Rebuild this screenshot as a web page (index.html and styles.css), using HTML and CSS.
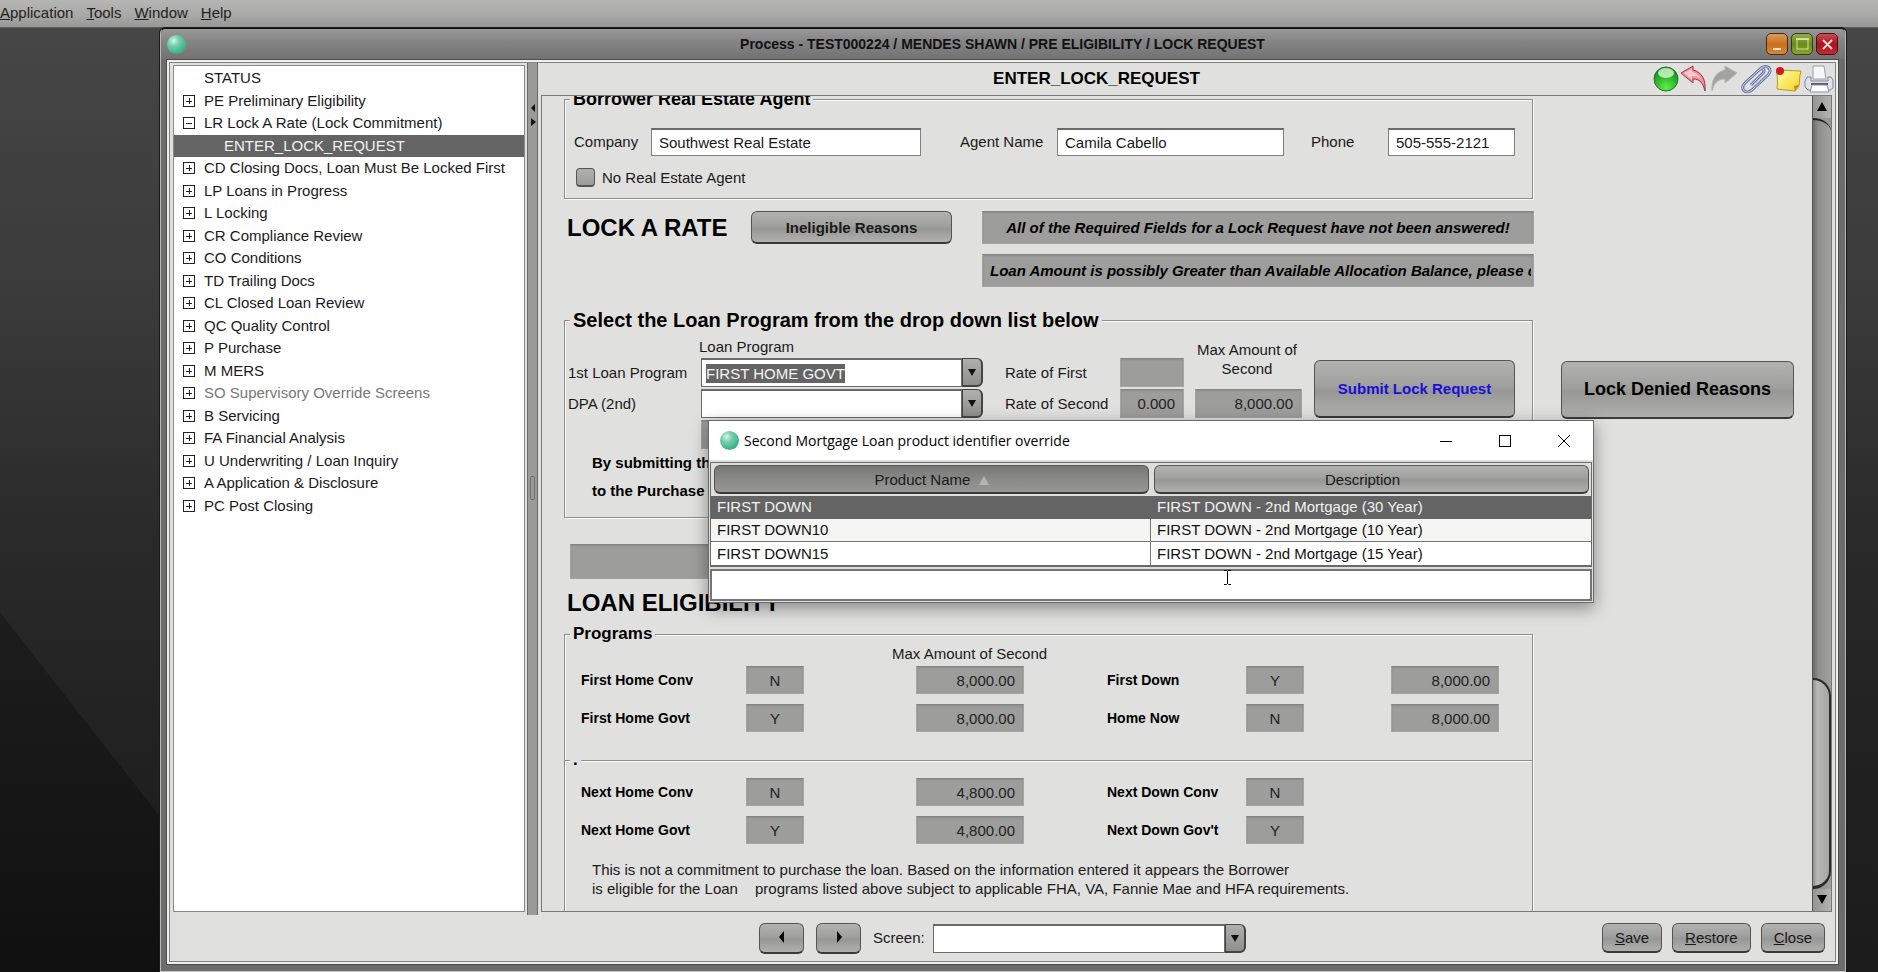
FILE: index.html
```
<!DOCTYPE html>
<html lang="en">
<head>
<meta charset="UTF-8">
<meta name="viewport" content="width=device-width, initial-scale=1.0">
<title>Process - Lock Request</title>
<link rel="stylesheet" href="styles.css">
</head>
<body>
<div class="desktop">

    <nav class="menubar">
        <a href="#"><u>A</u>pplication</a>
        <a href="#"><u>T</u>ools</a>
        <a href="#"><u>W</u>indow</a>
        <a href="#"><u>H</u>elp</a>
    </nav>

    <div class="window">
        <div class="titlebar">
            <span class="globe"></span>
            <span class="window-title">Process - TEST000224 / MENDES SHAWN / PRE ELIGIBILITY / LOCK REQUEST</span>
            <div class="window-buttons">
                <button type="button" class="win-btn minimize" aria-label="Minimize"><svg width="20" height="20" viewBox="0 0 20 20"><path d="M6 15h8" stroke="#f3e3cf" stroke-width="2"/></svg></button>
                <button type="button" class="win-btn maximize" aria-label="Maximize"><svg width="20" height="20" viewBox="0 0 20 20"><rect x="5" y="5" width="11" height="10" fill="none" stroke="#cfe0a8"/><path d="M4 5h13" stroke="#cfe0a8" stroke-width="2"/></svg></button>
                <button type="button" class="win-btn shut" aria-label="Close window"><svg width="20" height="20" viewBox="0 0 20 20"><path d="M6 6l9 9M15 6l-9 9" stroke="#f0d4d4" stroke-width="2"/></svg></button>
            </div>
        </div>

        <div class="window-body">
        <div class="pane">
            <div class="main">
                <div class="tree">
                <ul class="tree-list">
                    <li class="leaf">STATUS</li>
                    <li><i class="box plus"></i>PE Preliminary Eligibility</li>
                    <li><i class="box"></i>LR Lock A Rate (Lock Commitment)</li>
                    <li class="child selected">ENTER_LOCK_REQUEST</li>
                    <li><i class="box plus"></i>CD Closing Docs, Loan Must Be Locked First</li>
                    <li><i class="box plus"></i>LP Loans in Progress</li>
                    <li><i class="box plus"></i>L Locking</li>
                    <li><i class="box plus"></i>CR Compliance Review</li>
                    <li><i class="box plus"></i>CO Conditions</li>
                    <li><i class="box plus"></i>TD Trailing Docs</li>
                    <li><i class="box plus"></i>CL Closed Loan Review</li>
                    <li><i class="box plus"></i>QC Quality Control</li>
                    <li><i class="box plus"></i>P Purchase</li>
                    <li><i class="box plus"></i>M MERS</li>
                    <li class="off"><i class="box plus"></i>SO Supervisory Override Screens</li>
                    <li><i class="box plus"></i>B Servicing</li>
                    <li><i class="box plus"></i>FA Financial Analysis</li>
                    <li><i class="box plus"></i>U Underwriting / Loan Inquiry</li>
                    <li><i class="box plus"></i>A Application &amp; Disclosure</li>
                    <li><i class="box plus"></i>PC Post Closing</li>
                </ul>
                </div>

                <div class="splitter">
                    <svg class="splitter-arrows" width="10" height="24" viewBox="0 0 10 24"><path d="M7 1v8L3 5zM3 15v8l5-4z" fill="#111"/></svg>
                    <span class="grip"></span>
                </div>

                <div class="screen">
                    <div class="screen-head">
                        <h1>ENTER_LOCK_REQUEST</h1>
                        <div class="tools">
                            <button type="button" class="tool" aria-label="Online"><svg width="28" height="30" viewBox="0 0 28 30">
                                <defs><radialGradient id="green" cx="50%" cy="85%" r="80%"><stop offset="0" stop-color="#5cf04a"/><stop offset="1" stop-color="#0a8a16"/></radialGradient></defs>
                                <circle cx="14" cy="15" r="12" fill="url(#green)" stroke="#2b6b2e"/><ellipse cx="14" cy="9" rx="8" ry="5" fill="#d8fbd2" opacity=".8"/></svg></button>
                            <button type="button" class="tool" aria-label="Undo"><svg width="28" height="30" viewBox="0 0 28 30">
                                <path d="M1 9L13 2v4c9 2 13 10 12 21-2-8-5-12-12-12v4z" fill="#f0909a" stroke="#a83040"/><path d="M4 9l8-4v3c5 1 8 4 10 8-3-3-6-4-10-4v4z" fill="#fbc8cc"/></svg></button>
                            <button type="button" class="tool" aria-label="Redo"><svg width="32" height="30" viewBox="0 0 32 30">
                                <path d="M29 9L17 2v4C8 8 3 16 4 27c2-8 6-12 13-12v4z" fill="#a2a2a0" stroke="#b4b4b2"/></svg></button>
                            <button type="button" class="tool" aria-label="Attachment"><svg width="32" height="30" viewBox="0 0 32 30">
                                <path d="M11 20L23 8c3-3-1-6-4-3L5 18c-6 6 1 12 7 7L28 10c6-6-2-12-8-6" transform="translate(0 1)" fill="none" stroke="#6c78a8" stroke-width="3"/>
                                <path d="M11 20L23 8c3-3-1-6-4-3L5 18c-6 6 1 12 7 7L28 10c6-6-2-12-8-6" transform="translate(0 1)" fill="none" stroke="#cdd4ea" stroke-width="1"/></svg></button>
                            <button type="button" class="tool" aria-label="Note"><svg width="32" height="30" viewBox="0 0 32 30">
                                <defs><linearGradient id="note" x1="0" y1="0" x2="1" y2="1"><stop offset="0" stop-color="#ffffa8"/><stop offset="1" stop-color="#f2d21c"/></linearGradient></defs>
                                <path d="M5 6l24 1c-2 6-1 10-2 15l-4 5-18-2c1-7 0-12 0-19z" fill="url(#note)" stroke="#b9962e"/><path d="M27 21l-5 1 1 5z" fill="#b98a1c"/><circle cx="8" cy="7" r="4" fill="#c81e22"/></svg></button>
                            <button type="button" class="tool" aria-label="Print"><svg width="32" height="30" viewBox="0 0 32 30">
                                <path d="M9 2h11l2 13H9z" fill="#f6f7fb" stroke="#9aa0b0"/><path d="M3 13h4v4h17v-4h3l2 3v8l-3 2H4l-3-3v-6z" fill="#dfe2ec" stroke="#7f8596"/><path d="M7 20h17" stroke="#555b6b" stroke-width="2"/><path d="M8 21h15l2 7H6z" fill="#fff" stroke="#8d93a3"/></svg></button>
                        </div>
                    </div>

                    <div class="scroll-pane">
                        <form class="content">
                            <fieldset class="agent">
                                <legend class="medium">Borrower Real Estate Agent</legend>
                                <div class="agent-row">
                                    <label for="company">Company</label>
                                    <input class="text" type="text" id="company" value="Southwest Real Estate">
                                    <label for="agent" class="second">Agent Name</label>
                                    <input class="text" type="text" id="agent" value="Camila Cabello">
                                    <label for="phone" class="third">Phone</label>
                                    <input class="text" type="text" id="phone" value="505-555-2121">
                                </div>
                                <div class="check-row">
                                    <input type="checkbox" id="noagent">
                                    <label for="noagent">No Real Estate Agent</label>
                                </div>
                            </fieldset>

                            <div class="lock-row">
                                <h2>LOCK A RATE</h2>
                                <button type="button" class="btn strong">Ineligible Reasons</button>
                                <div class="messages">
                                    <input class="gray message" type="text" aria-label="Lock message" readonly value="All of the Required Fields for a Lock Request have not been answered!">
                                    <input class="gray message long" type="text" aria-label="Balance message" readonly value="Loan Amount is possibly Greater than Available Allocation Balance, please c">
                                </div>
                            </div>

                            <div class="program-row">
                                <fieldset class="program">
                                    <legend class="large">Select the Loan Program from the drop down list below</legend>
                                    <div class="program-grid">
                                        <span class="head-program">Loan Program</span>
                                        <label for="first" class="col-1 row-2">1st Loan Program</label>
                                        <div class="combo col-2 row-2">
                                            <select id="first" class="marked"><option>FIRST HOME GOVT</option></select>
                                            <span class="arrow"></span>
                                        </div>
                                        <label for="dpa" class="col-1 row-3">DPA (2nd)</label>
                                        <div class="combo col-2 row-3">
                                            <select id="dpa"><option></option></select>
                                            <span class="arrow"></span>
                                        </div>
                                        <input class="gray col-2 row-4" type="text" aria-label="Second program" readonly>
                                        <label for="rate1" class="col-3 row-2">Rate of First</label>
                                        <input class="gray right col-4 row-2" type="text" id="rate1" readonly>
                                        <label for="rate2" class="col-3 row-3">Rate of Second</label>
                                        <input class="gray right col-4 row-3" type="text" id="rate2" readonly value="0.000">
                                        <label for="maxsecond" class="head-max">Max Amount of Second</label>
                                        <input class="gray right col-5 row-3" type="text" id="maxsecond" readonly value="8,000.00">
                                        <button type="button" class="btn strong submit">Submit Lock Request</button>
                                    </div>
                                    <p class="agree">By submitting the<br>to the Purchase</p>
                                </fieldset>
                                <button type="button" class="btn denied">Lock Denied Reasons</button>
                            </div>

                            <input class="gray wide" type="text" aria-label="Status" readonly>
                            <h2 class="eligibility">LOAN ELIGIBILITY</h2>

                            <fieldset class="programs">
                                <legend>Programs</legend>
                                <p class="head-amount">Max Amount of Second</p>
                                <div class="elig-grid">
                                    <label for="fhc">First Home Conv</label>
                                    <input class="gray flag" type="text" id="fhc" readonly value="N">
                                    <input class="gray right money" type="text" aria-label="First Home Conv amount" readonly value="8,000.00">
                                    <label for="fd" class="other">First Down</label>
                                    <input class="gray flag" type="text" id="fd" readonly value="Y">
                                    <input class="gray right money" type="text" aria-label="First Down amount" readonly value="8,000.00">
                                    <label for="fhg">First Home Govt</label>
                                    <input class="gray flag" type="text" id="fhg" readonly value="Y">
                                    <input class="gray right money" type="text" aria-label="First Home Govt amount" readonly value="8,000.00">
                                    <label for="hn" class="other">Home Now</label>
                                    <input class="gray flag" type="text" id="hn" readonly value="N">
                                    <input class="gray right money" type="text" aria-label="Home Now amount" readonly value="8,000.00">
                                </div>
                                <fieldset class="next">
                                    <legend>.</legend>
                                    <div class="elig-grid">
                                        <label for="nhc">Next Home Conv</label>
                                        <input class="gray flag" type="text" id="nhc" readonly value="N">
                                        <input class="gray right money" type="text" aria-label="Next Home Conv amount" readonly value="4,800.00">
                                        <label for="ndc" class="other">Next Down Conv</label>
                                        <input class="gray flag" type="text" id="ndc" readonly value="N">
                                        <span></span>
                                        <label for="nhg">Next Home Govt</label>
                                        <input class="gray flag" type="text" id="nhg" readonly value="Y">
                                        <input class="gray right money" type="text" aria-label="Next Home Govt amount" readonly value="4,800.00">
                                        <label for="ndg" class="other">Next Down Gov't</label>
                                        <input class="gray flag" type="text" id="ndg" readonly value="Y">
                                        <span></span>
                                    </div>
                                    <p class="disclaimer">This is not a commitment to purchase the loan. Based on the information entered it appears the Borrower<br><span class="lead">is eligible for the Loan</span>programs listed above subject to applicable FHA, VA, Fannie Mae and HFA requirements.</p>
                                </fieldset>
                            </fieldset>
                        </form>

                        <div class="scrollbar">
                            <button type="button" class="scroll-btn" aria-label="Scroll up"><svg width="18" height="22" viewBox="0 0 18 22"><path d="M9 6l5 9H4z" fill="#000"/></svg></button>
                            <div class="track"><div class="thumb"></div></div>
                            <button type="button" class="scroll-btn" aria-label="Scroll down"><svg width="18" height="22" viewBox="0 0 18 22"><path d="M9 15l5-9H4z" fill="#000"/></svg></button>
                        </div>
                    </div>
                </div>
            </div>

            <div class="footer">
                <div class="navigate">
                    <button type="button" class="btn step" aria-label="Previous"><svg width="10" height="12" viewBox="0 0 10 12"><path d="M7 0v12L2 6z" fill="#000"/></svg></button>
                    <button type="button" class="btn step" aria-label="Next"><svg width="10" height="12" viewBox="0 0 10 12"><path d="M3 0v12l5-6z" fill="#000"/></svg></button>
                    <label for="screen">Screen:</label>
                    <div class="combo screen-combo">
                        <select id="screen"><option></option></select>
                        <span class="arrow"></span>
                    </div>
                </div>
                <div class="actions">
                    <button type="button" class="btn"><u>S</u>ave</button>
                    <button type="button" class="btn"><u>R</u>estore</button>
                    <button type="button" class="btn"><u>C</u>lose</button>
                </div>
            </div>
        </div>
        </div>
    </div>

    <div class="dialog">
        <div class="dialog-title">
            <span class="globe"></span>
            <span class="dialog-name">Second Mortgage Loan product identifier override</span>
            <button type="button" aria-label="Minimize dialog"><svg width="14" height="14" viewBox="0 0 14 14"><path d="M1 7.5h12" stroke="#000"/></svg></button>
            <button type="button" aria-label="Maximize dialog"><svg width="14" height="14" viewBox="0 0 14 14"><rect x="1.5" y="1.5" width="11" height="11" fill="none" stroke="#000"/></svg></button>
            <button type="button" aria-label="Close dialog"><svg width="14" height="14" viewBox="0 0 14 14"><path d="M1 1l12 12M13 1L1 13" stroke="#000"/></svg></button>
        </div>
        <div class="dialog-body">
            <table class="products">
                <thead>
                    <tr>
                        <th><button type="button" class="btn sorted">Product Name <span class="sort"></span></button></th>
                        <th><button type="button" class="btn unsorted">Description</button></th>
                    </tr>
                </thead>
                <tbody>
                    <tr class="selected"><td>FIRST DOWN</td><td>FIRST DOWN - 2nd Mortgage (30 Year)</td></tr>
                    <tr class="odd"><td>FIRST DOWN10</td><td>FIRST DOWN - 2nd Mortgage (10 Year)</td></tr>
                    <tr><td>FIRST DOWN15</td><td>FIRST DOWN - 2nd Mortgage (15 Year)</td></tr>
                </tbody>
            </table>
            <input type="text" class="search" aria-label="Search">
        </div>
        <svg class="cursor" width="9" height="15" viewBox="0 0 9 15"><path d="M1 .5h2.500l1 1 1-1H8M4.500 1.500v12M1 14.500h2.500l1-1 1 1H8" fill="none" stroke="#000"/></svg>
    </div>
</div>
</body>
</html>
```
FILE: styles.css
```
* {
    box-sizing: border-box;
}
body {
    margin: 0;
    font-family: "Liberation Sans", Arial, sans-serif;
    font-size: 15px;
    line-height: 18px;
    color: #1a1a1a;
}
input, select, button {
    font-family: inherit;
    font-size: 15px;
    color: inherit;
    border-radius: 0;
    margin: 0;
}
h1, h2, p {
    margin: 0;
}

/* Desktop */
.desktop {
    position: relative;
    display: flex;
    flex-direction: column;
    height: 100vh;
    overflow: hidden;
    background: linear-gradient(to bottom, #474747 0%, #3b3b3b 30%, #2a2a2a 55%, #202020 80%, #1c1c1c 100%);
}
.desktop::before {
    content: "";
    position: absolute;
    left: 0;
    top: 0;
    width: 160px;
    height: 100%;
    background: linear-gradient(to bottom, #1e1e1e 60%, #101010 100%);
    clip-path: polygon(0 63%, 100% 84%, 100% 100%, 0 100%);
}
.menubar {
    flex: none;
    display: flex;
    gap: 13px;
    height: 28px;
    align-items: center;
    padding-bottom: 2px;
    background: linear-gradient(#b6b6b4, #a9a9a7 55%, #979795);
    border-bottom: 1px solid #5e5e5e;
}
.menubar a {
    color: #222;
    text-decoration: none;
}

/* Process window */
.window {
    position: relative;
    flex: 1;
    display: flex;
    flex-direction: column;
    min-height: 0;
    margin: 0 32px 0 160px;
    padding: 0 6px 6px 5px;
    background: #6c6c6c;
    border-top: 1px solid #111;
    border-right: 1px solid #b8b8b8;
    border-left: 1px solid #b8b8b8;
    border-bottom: 1px solid #c8c8c8;
    border-radius: 5px 5px 0 0;
    box-shadow: 0 0 0 1px #1a1a1a;
}
.titlebar {
    flex: none;
    display: grid;
    grid-template-columns: 1fr auto 1fr;
    align-items: center;
    height: 30px;
    margin: 0 -6px 0 -5px;
    padding: 0 7px 0 6px;
    border-radius: 5px 5px 0 0;
    background: linear-gradient(#999, #858585 40%, #727272);
}
.globe {
    flex: none;
    width: 19px;
    height: 19px;
    border-radius: 50%;
    background: radial-gradient(circle at 35% 30%, #d6f5e6 0, #74d0ac 30%, #45b58c 65%, #3c9a79 100%);
}
.window-title {
    font-size: 14px;
    font-weight: bold;
    color: #111;
}
.window-buttons {
    justify-self: end;
    display: flex;
    gap: 3px;
}
.win-btn {
    display: block;
    width: 22px;
    height: 22px;
    padding: 0;
    border: 1px solid #4a2a12;
    border-radius: 5px;
}
.win-btn svg {
    display: block;
}
.minimize {
    background: linear-gradient(#dc9a5c, #c9701c 50%, #d98836);
}
.maximize {
    background: linear-gradient(#94ac4c, #6d8c16 50%, #84a42c);
    border-color: #33400e;
}
.shut {
    background: linear-gradient(#c84e54, #a8141c 50%, #c02c34);
    border-color: #4a0c10;
}
.window-body {
    flex: 1;
    display: flex;
    min-height: 0;
    padding: 2px;
    background: #efefed;
    border: 1px solid #4c4c4c;
}
.pane {
    flex: 1;
    display: flex;
    flex-direction: column;
    min-width: 0;
    background: #e0e0de;
    border: 1px solid #828280;
}
.main {
    flex: 1;
    display: flex;
    min-height: 0;
}

/* Tree */
.tree {
    flex: none;
    width: 352px;
    margin: 2px 2px 3px 3px;
    padding: 1px 0;
    background: #fff;
    border: 1px solid #8a8a88;
}
.tree-list {
    display: grid;
    grid-auto-rows: 1fr;
    height: 450px;
    margin: 0;
    padding: 0;
    list-style: none;
}
.tree li {
    display: flex;
    align-items: center;
    padding-left: 9px;
    white-space: nowrap;
}
.tree .leaf {
    padding-left: 30px;
}
.tree .child {
    padding-left: 50px;
}
.tree .selected {
    background: #646464;
    color: #f2f2f2;
}
.tree .off {
    color: #777;
}
.box {
    width: 12px;
    height: 12px;
    margin-right: 9px;
    border: 1px solid #222;
    background: linear-gradient(#222, #222) 2px 5px / 6px 1px no-repeat;
}
.box.plus {
    background: linear-gradient(#222, #222) 2px 5px / 6px 1px no-repeat, linear-gradient(#222, #222) 5px 2px / 1px 6px no-repeat;
}
.splitter {
    position: relative;
    flex: none;
    width: 11px;
    background: #9a9a98;
    border: solid #6a6a68;
    border-width: 0 1px;
}
.splitter-arrows {
    position: absolute;
    left: 0;
    top: 40px;
}
.grip {
    position: absolute;
    left: 2px;
    top: 413px;
    width: 5px;
    height: 24px;
    border: 1px solid #6e6e6c;
    border-radius: 2px;
}

/* Screen header */
.screen {
    flex: 1;
    display: flex;
    flex-direction: column;
    min-width: 0;
    padding: 0 3px 3px 3px;
}
.screen-head {
    display: flex;
    align-items: center;
    height: 32px;
}
.screen-head h1 {
    flex: 1;
    text-align: center;
    font-size: 17px;
    color: #000;
}
.tools {
    display: flex;
    margin-right: -4px;
}
.tool {
    padding: 0;
    border: none;
    background: none;
}
.tool svg {
    display: block;
}
.scroll-pane {
    flex: 1;
    display: flex;
    min-height: 0;
    overflow: hidden;
    border: 1px solid #787876;
}
.content {
    flex: 1;
    min-width: 0;
    height: 100%;
    overflow: hidden;
    padding: 0 0 0 22px;
}

/* Form parts */
fieldset {
    width: 969px;
    margin: 0;
    padding: 0;
    border: 1px solid #8e8e8c;
    box-shadow: 1px 1px 0 #fafafa, inset 1px 1px 0 #fafafa;
}
legend {
    margin-left: 5px;
    padding: 0 3px;
    font-size: 17px;
    line-height: 22px;
    font-weight: bold;
    color: #000;
    background: #e0e0de;
}
legend.medium {
    font-size: 18px;
}
legend.large {
    font-size: 20px;
    line-height: 24px;
}
h2 {
    padding-left: 3px;
    font-size: 24px;
    line-height: 33px;
    color: #000;
}
.text, .search {
    height: 28px;
    padding: 0 7px;
    background: #fff;
    border: 1px solid #808080;
    border-top: 2px solid #6a6a6a;
}
.gray {
    width: 100%;
    min-width: 0;
    height: 29px;
    padding: 0 8px;
    background: #9d9d9b;
    border: 1px solid #a4a4a2;
    border-top-color: #858583;
    box-shadow: inset 0 1px 2px #8c8c8a;
    color: #222;
}
.right {
    text-align: right;
}
.btn {
    padding: 0;
    background: linear-gradient(#b2b2b0, #a0a09e 45%, #979795 55%, #b0b0ae);
    border: 1px solid #555;
    border-bottom: 2px solid #3a3a3a;
    border-radius: 6px;
}
.btn.strong {
    font-weight: bold;
}
.combo {
    display: flex;
    height: 29px;
}
.combo select {
    flex: 1;
    min-width: 0;
    height: 29px;
    padding: 0 4px;
    appearance: none;
    background: #fff;
    border: 1px solid #6a6a6a;
    border-top-width: 2px;
}
.combo select.marked {
    background: linear-gradient(#646464, #646464) 4px 4px / 139px 19px no-repeat, #fff;
    color: #f4f4f4;
}
.arrow {
    position: relative;
    width: 21px;
    background: linear-gradient(#b0b0ae, #8e8e8c);
    border: 1px solid #444;
    border-width: 1px 2px 2px 1px;
    border-radius: 0 6px 6px 0;
    pointer-events: none;
}
.arrow::after {
    content: "";
    position: absolute;
    left: 5px;
    top: 10px;
    border: 4px solid transparent;
    border-top: 7px solid #111;
    border-bottom: none;
}

/* Borrower agent */
.agent {
    height: 111px;
    margin-top: -8px;
}
.agent-row {
    display: grid;
    grid-template-columns: 77px 270px 136px 227px 104px 127px;
    align-items: center;
    padding: 18px 0 0 9px;
}
.agent-row .second {
    padding-left: 39px;
}
.agent-row .third {
    padding-left: 27px;
}
.check-row {
    display: flex;
    align-items: center;
    gap: 7px;
    padding: 12px 0 0 11px;
}
.check-row input {
    width: 19px;
    height: 19px;
    appearance: none;
    background: linear-gradient(#b0b0ae, #9c9c9a);
    border: 1px solid #555;
    border-bottom-width: 2px;
    border-radius: 4px;
}

/* Lock a rate */
.lock-row {
    display: grid;
    grid-template-columns: 187px 201px 582px;
    align-items: start;
    margin-top: 12px;
}
.lock-row .btn {
    height: 33px;
}
.messages {
    display: flex;
    flex-direction: column;
    gap: 10px;
    padding-left: 30px;
}
.message {
    height: 33px;
    text-align: center;
    font-weight: bold;
    font-style: italic;
    color: #000;
}
.message.long {
    padding: 0 2px 0 7px;
    text-align: left;
}

/* Loan program */
.program-row {
    display: flex;
    align-items: flex-start;
    margin-top: 21px;
}
.program {
    height: 210px;
}
.program-grid {
    display: grid;
    grid-template-columns: 133px 282px 137px 64px 118px 213px;
    grid-template-rows: 19px 29px 29px 29px;
    row-gap: 2px;
    align-items: center;
    padding: 5px 0 0 3px;
}
.col-1 { grid-column: 1; }
.col-2 { grid-column: 2; }
.col-3 { grid-column: 3; padding-left: 22px; }
.col-4 { grid-column: 4; }
.col-5 { grid-column: 5; width: 107px; justify-self: end; }
.row-2 { grid-row: 2; }
.row-3 { grid-row: 3; }
.row-4 { grid-row: 4; }
.head-program {
    grid-area: 1 / 2;
    margin-left: -2px;
}
.head-max {
    grid-area: 1 / 5 / 3 / 6;
    align-self: start;
    padding: 3px 0 0 8px;
    line-height: 19px;
    text-align: center;
}
.submit {
    grid-area: 2 / 6 / 4 / 7;
    justify-self: end;
    align-self: end;
    width: 201px;
    height: 58px;
    color: #1a10d8;
}
.denied {
    width: 233px;
    height: 58px;
    margin: 53px 0 0 28px;
    font-size: 18px;
    font-weight: bold;
    color: #000;
}
.agree {
    padding-left: 27px;
    line-height: 28px;
    font-weight: bold;
    color: #000;
}
.wide {
    display: block;
    width: 963px;
    height: 35px;
    margin: 26px 0 0 6px;
}

/* Loan eligibility */
.eligibility {
    margin-top: 7px;
    line-height: 33px;
}
.programs {
    height: 330px;
    margin-top: 4px;
}
.head-amount {
    padding-left: 327px;
    line-height: 17px;
}
.elig-grid {
    display: grid;
    grid-template-columns: 165px 58px 220px 222px 58px 195px;
    row-gap: 10px;
    align-items: center;
    padding: 4px 0 0 16px;
}
.elig-grid label {
    font-size: 14px;
    font-weight: bold;
    color: #000;
}
.elig-grid .gray {
    height: 28px;
}
.elig-grid .other {
    padding-left: 83px;
}
.elig-grid .flag {
    text-align: center;
}
.elig-grid .money {
    width: 108px;
    justify-self: end;
}
.next {
    width: 100%;
    height: 200px;
    margin-top: 17px;
    border-width: 1px 0 0;
    box-shadow: inset 0 1px 0 #fafafa;
}
.next .elig-grid {
    padding-top: 7px;
}
.disclaimer {
    padding: 16px 0 0 27px;
    line-height: 19px;
}
.lead {
    display: inline-block;
    width: 163px;
}

/* Scrollbar */
.scrollbar {
    flex: none;
    display: flex;
    flex-direction: column;
    width: 19px;
    background: #989896;
    border-left: 1px solid #555;
}
.scroll-btn {
    height: 22px;
    padding: 0;
    border: none;
    background: linear-gradient(to right, #959593, #b4b4b2);
}
.scroll-btn svg {
    display: block;
}
.track {
    flex: 1;
    display: flex;
    align-items: flex-end;
    background: linear-gradient(to right, #6c6c6a, #8e8e8c 30%, #a2a2a0);
    border-top: 2px solid #222;
    border-top-right-radius: 18px 14px;
}
.thumb {
    width: 100%;
    height: 211px;
    background: linear-gradient(to right, #8e8e8c, #b8b8b6 25%, #a6a6a4);
    border: 2px solid #2a2a2a;
    border-left: none;
    border-bottom-width: 3px;
    border-radius: 0 18px 18px 0;
}

/* Footer */
.footer {
    flex: none;
    display: grid;
    grid-template-columns: 1fr auto 1fr;
    align-items: center;
    height: 46px;
}
.navigate {
    grid-column: 2;
    display: flex;
    align-items: center;
}
.step {
    width: 45px;
    height: 31px;
    margin-right: 12px;
}
.step + label {
    width: 60px;
}
.screen-combo {
    width: 313px;
}
.actions {
    justify-self: end;
    display: flex;
    gap: 10px;
    padding-right: 10px;
}
.actions .btn {
    height: 30px;
    padding: 0 12px;
}

/* Product dialog */
.dialog {
    position: absolute;
    left: 708px;
    top: 420px;
    width: 886px;
    background: #dededc;
    border: 1px solid #6a6a6a;
    box-shadow: 0 5px 16px rgba(0, 0, 0, 0.4);
}
.dialog-title {
    display: flex;
    align-items: center;
    height: 39px;
    padding-left: 11px;
    background: #fff;
}
.dialog-name {
    flex: 1;
    padding-left: 5px;
    font-family: "Open Sans", "Noto Sans", sans-serif;
    font-size: 14px;
    color: #000;
}
.dialog-title button {
    display: flex;
    justify-content: center;
    width: 59px;
    padding: 0;
    border: none;
    background: none;
}
.dialog-body {
    padding: 2px 1px 1px 1px;
}
.products {
    width: 100%;
    table-layout: fixed;
    border-spacing: 0;
    border: 1px solid #6a6a6a;
    border-bottom-width: 2px;
}
.products th {
    height: 33px;
    padding: 2px 2px 2px 3px;
    font-weight: normal;
}
.products th .btn {
    display: block;
    width: 100%;
    height: 29px;
}
.products th .sorted {
    background: linear-gradient(#777, #8c8c8a 60%, #969694);
}
.products th .unsorted {
    padding-right: 18px;
}
.sort {
    display: inline-block;
    margin-left: 4px;
    border: 5px solid transparent;
    border-top: none;
    border-bottom: 9px solid #b4b4b2;
}
.products td {
    height: 23px;
    padding: 0 6px;
    background: #fff;
    border-bottom: 1px solid #777;
    color: #111;
}
.products td:first-child {
    border-right: 1px solid #777;
}
.products .odd td {
    background: #f5f5f3;
}
.products .selected td {
    background: #646464;
    border-color: #646464;
    color: #f2f2f2;
}
.products tr:last-child td {
    border-bottom: none;
}
.search {
    display: block;
    width: 100%;
    height: 32px;
    margin-top: 2px;
    border: 2px solid #747474;
}
.cursor {
    position: absolute;
    left: 514px;
    top: 149px;
}
```
